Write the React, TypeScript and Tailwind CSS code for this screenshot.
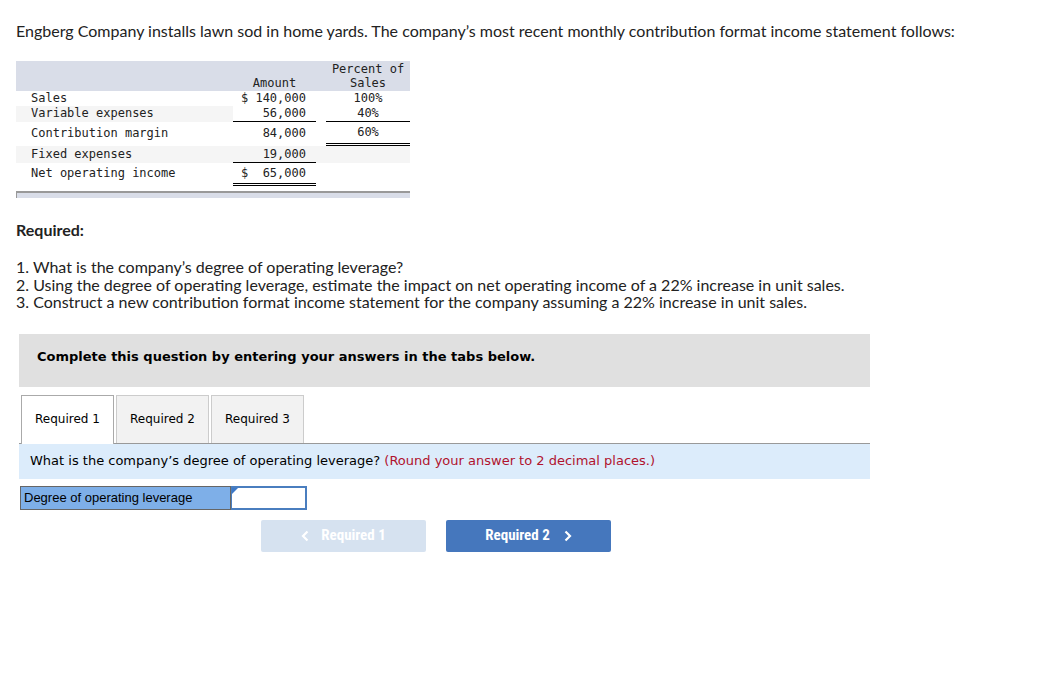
import React from "react";

const body = { fontFamily: "Lato, 'Open Sans', sans-serif" };
const mono = { fontFamily: "'DejaVu Sans Mono', 'Liberation Mono', monospace" };
const verdana = { fontFamily: "'DejaVu Sans', Verdana, sans-serif" };
const arial = { fontFamily: "'Liberation Sans', Arial, sans-serif" };
const narrow = { fontFamily: "'Liberation Sans Narrow', 'Roboto Condensed', Roboto, sans-serif" };

export default function App() {
  return (
    <div className="w-[1048px] h-[687px] bg-white text-[#333]" style={body}>
      <div className="pl-4 pt-[21px]">
        <p className="text-[16px] leading-5 text-[#222]">
          Engberg Company installs lawn sod in home yards. The company’s most recent monthly contribution format income statement follows:
        </p>

        {/* table */}
        <div className="mt-[20px] w-[394px] text-[12px] text-[#222]" style={mono}>
          <div className="grid grid-cols-[217px_83px_10px_84px] h-[30px] bg-[#d9dde8] leading-[14px]">
            <div />
            <div className="flex items-end justify-center pb-[1px]">Amount</div>
            <div />
            <div className="flex flex-col items-center pt-[1px]">
              <span>Percent of</span>
              <span>Sales</span>
            </div>
          </div>
          <div className="grid grid-cols-[217px_83px_10px_84px] h-[15px] leading-[15px]">
            <div className="pl-[15px]">Sales</div>
            <div className="flex justify-between pl-[8px] pr-[10px]"><span>$</span><span>140,000</span></div>
            <div />
            <div className="text-center">100%</div>
          </div>
          <div className="grid grid-cols-[217px_83px_10px_84px] h-[16px] leading-[15px] bg-[#f5f5f5]">
            <div className="pl-[15px]">Variable expenses</div>
            <div className="text-right pr-[10px] border-b border-black bg-white">56,000</div>
            <div className="bg-white" />
            <div className="text-center border-b border-black bg-white">40%</div>
          </div>
          <div className="grid grid-cols-[217px_83px_10px_84px] h-[24px] leading-[22px]">
            <div className="pl-[15px]">Contribution margin</div>
            <div className="text-right pr-[10px]">84,000</div>
            <div />
            <div className="text-center border-b-[3px] border-double border-black leading-[20px]">60%</div>
          </div>
          <div className="grid grid-cols-[217px_83px_10px_84px] h-[17px] leading-[16px] bg-[#f5f5f5]">
            <div className="pl-[15px]">Fixed expenses</div>
            <div className="text-right pr-[10px] border-b border-black">19,000</div>
            <div />
            <div />
          </div>
          <div className="grid grid-cols-[217px_83px_10px_84px] h-[23px] leading-[20px]">
            <div className="pl-[15px]">Net operating income</div>
            <div className="flex justify-between pl-[8px] pr-[10px] border-b-[3px] border-double border-black"><span>$</span><span>65,000</span></div>
            <div />
            <div />
          </div>
          <div className="mt-[5px] h-[7px] bg-[#d9dde8] border-t-2 border-l border-[#999]" />
        </div>

        <p className="mt-[22px] text-[16px] font-bold leading-5 text-[#222]">Required:</p>
        <div className="mt-[18px] text-[16px] leading-[17.5px] text-[#222]">
          <p>1. What is the company’s degree of operating leverage?</p>
          <p>2. Using the degree of operating leverage, estimate the impact on net operating income of a 22% increase in unit sales.</p>
          <p>3. Construct a new contribution format income statement for the company assuming a 22% increase in unit sales.</p>
        </div>
      </div>

      <div className="ml-[19px] w-[851px] mt-[23px]" style={verdana}>
        <div className="h-[53px] bg-[#e0e0e0] pt-[14px] pl-[18px] text-[13px] leading-[18px] font-bold text-black">
          Complete this question by entering your answers in the tabs below.
        </div>

        <div className="mt-[8px] flex items-end gap-[2px] pl-[2px] border-b border-[#999] h-[49px]">
          <div className="h-[49px] w-[93px] bg-white border border-b-0 border-[#aaa] flex items-center justify-center text-[12px] text-black -mb-px relative z-10 pb-px">Required 1</div>
          <div className="h-[48px] w-[93px] bg-[#f2f2f2] border border-b-0 border-[#ccc] flex items-center justify-center text-[12px] text-black">Required 2</div>
          <div className="h-[48px] w-[93px] bg-[#f2f2f2] border border-b-0 border-[#ccc] flex items-center justify-center text-[12px] text-black">Required 3</div>
        </div>

        <div className="h-[35px] bg-[#dcecfb] flex items-center pl-[11px] text-[13px] text-black">
          <span>What is the company’s degree of operating leverage?&nbsp;</span>
          <span className="text-[#b0132e]">(Round your answer to 2 decimal places.)</span>
        </div>

        <div className="mt-[7px] ml-px flex h-[24px]">
          <div className="w-[211px] bg-[#7eafe8] border border-[#666] flex items-center pl-[3px] text-[13px] text-black" style={arial}>
            Degree of operating leverage
          </div>
          <div className="relative w-[76px] bg-white border-2 border-l border-[#4a7ebf]">
            <svg className="absolute left-0 top-0" width="6" height="6" viewBox="0 0 6 6">
              <polygon points="0,0 6,0 0,6" fill="#3c78c8" />
            </svg>
          </div>
        </div>

        <div className="mt-[10px] flex gap-[20px] pl-[242px]" style={narrow}>
          <div className="w-[165px] h-[32px] rounded-[2px] bg-[#d6e2f0] flex items-center justify-center text-white text-[15px] font-bold gap-[12px]">
            <svg width="8" height="12" viewBox="0 0 8 12"><path d="M6.5 1.5 L2 6 L6.5 10.5" stroke="white" strokeWidth="2.2" fill="none" /></svg>
            <span>Required 1</span>
          </div>
          <div className="w-[165px] h-[32px] rounded-[2px] bg-[#4577bd] flex items-center justify-center text-white text-[15px] font-bold gap-[14px]">
            <span>Required 2</span>
            <svg width="8" height="12" viewBox="0 0 8 12"><path d="M1.5 1.5 L6 6 L1.5 10.5" stroke="white" strokeWidth="2.2" fill="none" /></svg>
          </div>
        </div>
      </div>
    </div>
  );
}
